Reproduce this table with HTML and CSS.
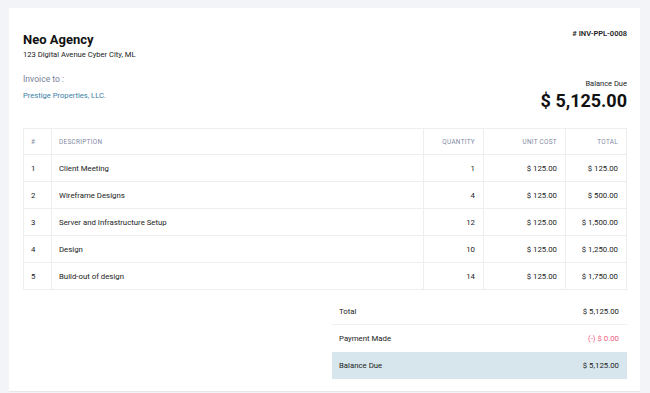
FILE: index.html
```html
<!DOCTYPE html>
<html>
<head>
<meta charset="utf-8">
<link rel="stylesheet" href="styles.css">
</head>
<body>
<div class="card">
  <div class="top">
    <div class="from">
      <h1 class="company">Neo Agency</h1>
      <div class="address">123 Digital Avenue Cyber City, ML</div>
    </div>
    <div class="inv-no"># INV-PPL-0008</div>
  </div>
  <div class="bill">
    <div class="to">
      <div class="to-label">Invoice to :</div>
      <div class="client">Prestige Properties, LLC.</div>
    </div>
    <div class="due">
      <div class="due-label">Balance Due</div>
      <div class="due-amount">$ 5,125.00</div>
    </div>
  </div>
  <table class="items">
    <colgroup>
      <col class="c-num"><col class="c-desc"><col class="c-qty"><col class="c-unit"><col class="c-total">
    </colgroup>
    <thead>
      <tr><th>#</th><th>Description</th><th class="r">Quantity</th><th class="r">Unit Cost</th><th class="r">Total</th></tr>
    </thead>
    <tbody>
      <tr><td>1</td><td>Client Meeting</td><td class="r">1</td><td class="r">$ 125.00</td><td class="r">$ 125.00</td></tr>
      <tr><td>2</td><td>Wireframe Designs</td><td class="r">4</td><td class="r">$ 125.00</td><td class="r">$ 500.00</td></tr>
      <tr><td>3</td><td>Server and Infrastructure Setup</td><td class="r">12</td><td class="r">$ 125.00</td><td class="r">$ 1,500.00</td></tr>
      <tr><td>4</td><td>Design</td><td class="r">10</td><td class="r">$ 125.00</td><td class="r">$ 1,250.00</td></tr>
      <tr><td>5</td><td>Build-out of design</td><td class="r">14</td><td class="r">$ 125.00</td><td class="r">$ 1,750.00</td></tr>
    </tbody>
  </table>
  <div class="totals">
    <div class="t-row sep"><span>Total</span><span>$ 5,125.00</span></div>
    <div class="t-row"><span>Payment Made</span><span class="paid">(-) $ 0.00</span></div>
    <div class="t-row balance"><span>Balance Due</span><span>$ 5,125.00</span></div>
  </div>
</div>
</body>
</html>
```
FILE: styles.css
```css
html, body {
  margin: 0;
  padding: 0;
}
body {
  background: #f3f4f7;
  font-family: Roboto, "Liberation Sans", sans-serif;
  color: #222;
  padding: 8px 10px 0 9px;
  height: 393px;
  box-sizing: border-box;
  overflow: hidden;
}
.card {
  background: #fff;
  height: 384px;
  box-sizing: border-box;
  padding: 14px 13px 0 14px;
  border-bottom: 1px solid #e6e8ec;
}
.top {
  display: flex;
  justify-content: space-between;
  align-items: flex-start;
}
.company {
  margin: 10px 0 0;
  font-size: 13px;
  font-weight: 700;
  line-height: 16px;
  color: #111;
}
.address {
  margin-top: 1px;
  font-size: 7.6px;
  line-height: 12px;
  color: #222;
}
.inv-no {
  margin-top: 7px;
  font-size: 7.5px;
  font-weight: 600;
  line-height: 10px;
  color: #222;
}
.bill {
  display: flex;
  justify-content: space-between;
  align-items: flex-start;
  margin-top: 12px;
}
.to-label {
  font-size: 8.6px;
  line-height: 12px;
  color: #7a8299;
}
.client {
  margin-top: 6px;
  font-size: 7.6px;
  line-height: 10px;
  color: #3a80a6;
}
.due {
  text-align: right;
  margin-top: 6px;
}
.due-label {
  font-size: 7.5px;
  line-height: 10px;
  color: #222;
}
.due-amount {
  margin-top: 1px;
  font-size: 18px;
  font-weight: 700;
  line-height: 22px;
  color: #111;
}
.items {
  margin-top: 16px;
  width: 100%;
  border-collapse: collapse;
  table-layout: fixed;
  border: 1px solid #eceef1;
}
.c-num { width: 28px; }
.c-qty { width: 60px; }
.c-unit { width: 82px; }
.c-total { width: 61px; }
.items th, .items td {
  border: 1px solid #eceef1;
  padding: 0 8px 0 7px;
  text-align: left;
  white-space: nowrap;
}
.items th {
  height: 25px;
  font-size: 6.4px;
  font-weight: 400;
  letter-spacing: 0.3px;
  text-transform: uppercase;
  color: #7f8aa3;
}
.items td {
  height: 26px;
  font-size: 7.8px;
  color: #222;
}
.items .r {
  text-align: right;
}
.totals {
  width: 295px;
  margin: 8px 0 0 auto;
}
.t-row {
  display: flex;
  justify-content: space-between;
  align-items: center;
  height: 27px;
  box-sizing: border-box;
  padding: 0 8px 0 7px;
  font-size: 7.8px;
  color: #222;
}
.t-row.sep {
  border-bottom: 1px solid #eef0f3;
}
.paid {
  color: #ef5b80;
}
.t-row.balance {
  background: #d6e6ec;
}
```
